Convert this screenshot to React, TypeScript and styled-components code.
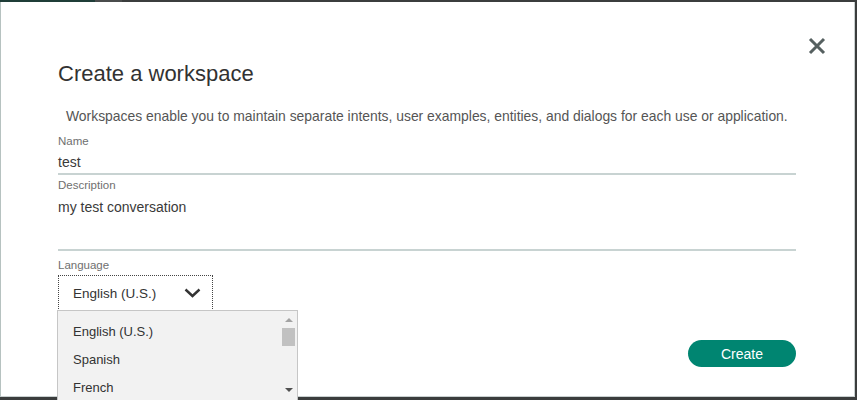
import * as React from 'react'
import styled, { createGlobalStyle } from 'styled-components'

const GlobalStyle = createGlobalStyle`
  html, body {
    margin: 0;
    padding: 0;
    background: #3b3d3d;
    font-family: "Liberation Sans", Arial, sans-serif;
  }
`

const languages = ['English (U.S.)', 'Spanish', 'French']

const Backdrop = styled.div`
  width: 857px;
  height: 400px;
  overflow: hidden;
  position: relative;
`

const TopStrip = styled.div`
  height: 2px;
  background: linear-gradient(90deg, #1f3d38 0 95px, #4a4c4c 95px 122px, #3b3d3d 122px);
`

const Modal = styled.div`
  position: relative;
  box-sizing: border-box;
  width: 855px;
  height: 395px;
  background: #fff;
  border-left: 1px solid #b6c2c0;
  border-right: 1px solid #c9d0d0;
  border-bottom: 1px solid #c9d0d0;
  padding: 0 58px 0 57px;
`

const CloseButton = styled.button`
  position: absolute;
  top: 35px;
  left: 807px;
  width: 18px;
  height: 18px;
  padding: 0;
  border: none;
  background: none;
  cursor: pointer;
  display: flex;
`

const Title = styled.h1`
  margin: 0;
  padding-top: 59px;
  font-size: 22px;
  line-height: 26px;
  font-weight: 400;
  color: #323232;
`

const Intro = styled.p`
  margin: 20px 0 6px 8px;
  font-size: 13.9px;
  line-height: 18px;
  color: #555;
`

const Field = styled.div<{ $height?: number; $ruled?: boolean }>`
  display: flex;
  flex-direction: column;
  border-bottom: ${(p) => (p.$ruled ? '2px solid #c8d3d2' : 'none')};
  height: ${(p) => (p.$height ? `${p.$height}px` : 'auto')};
`

const Label = styled.label<{ $gap?: number }>`
  font-size: 11.5px;
  line-height: 14px;
  color: #6f6f6f;
  margin-top: ${(p) => p.$gap ?? 3}px;
`

const Value = styled.div<{ $before?: number; $after?: number }>`
  font-size: 14px;
  line-height: 18px;
  color: #3a3a3a;
  margin-top: ${(p) => p.$before ?? 5}px;
  margin-bottom: ${(p) => p.$after ?? 0}px;
`

const SelectBox = styled.div`
  box-sizing: border-box;
  width: 155px;
  height: 36px;
  margin-top: 3px;
  border: 1px dotted #444;
  display: flex;
  align-items: center;
  justify-content: space-between;
  padding: 0 11px 0 14px;
  font-size: 13.5px;
  color: #333;
`

const Dropdown = styled.ul`
  position: absolute;
  left: 57px;
  top: 310px;
  width: 241px;
  height: 100px;
  box-sizing: border-box;
  margin: 0;
  padding: 7px 0 0;
  list-style: none;
  background: #f2f2f2;
  border: 1px solid #c6c6c6;
  overflow: hidden;
`

const Option = styled.li`
  height: 28px;
  line-height: 28px;
  padding-left: 15px;
  font-size: 13px;
  color: #333;
`

const Scrollbar = styled.div`
  position: absolute;
  top: 0;
  right: 0;
  width: 16px;
  height: 100%;
  background: #f2f2f2;
`

const Arrow = styled.div<{ $down?: boolean }>`
  position: absolute;
  left: 4px;
  width: 0;
  height: 0;
  border-left: 4px solid transparent;
  border-right: 4px solid transparent;
  ${(p) =>
    p.$down
      ? 'top: 77px; border-top: 4px solid #505050;'
      : 'top: 7px; border-bottom: 4px solid #a3a3a3;'}
`

const Thumb = styled.div`
  position: absolute;
  top: 17px;
  left: 1px;
  width: 13px;
  height: 18px;
  background: #c1c1c1;
`

const Footer = styled.div`
  display: flex;
  justify-content: flex-end;
  margin-top: 29px;
`

const CreateButton = styled.button`
  width: 108px;
  height: 27px;
  border: none;
  border-radius: 14px;
  background: #008571;
  color: #fff;
  font-family: inherit;
  font-size: 14px;
  cursor: pointer;
`

const Chevron = () => (
  <svg width="17" height="10" viewBox="0 0 17 10">
    <path d="M1.5 1.5 L8.5 8 L15.5 1.5" fill="none" stroke="#333" strokeWidth="2.4" />
  </svg>
)

const CloseIcon = () => (
  <svg width="18" height="18" viewBox="0 0 18 18">
    <path d="M2 2 L16 16 M16 2 L2 16" stroke="#566060" strokeWidth="3" />
  </svg>
)

const App: React.FC = () => (
  <>
    <GlobalStyle />
    <Backdrop>
      <TopStrip />
      <Modal>
        <CloseButton aria-label="Close">
          <CloseIcon />
        </CloseButton>
        <Title>Create a workspace</Title>
        <Intro>
          Workspaces enable you to maintain separate intents, user examples, entities, and dialogs
          for each use or application.
        </Intro>
        <Field $ruled>
          <Label>Name</Label>
          <Value $after={2}>test</Value>
        </Field>
        <Field $ruled $height={74}>
          <Label>Description</Label>
          <Value $before={6}>my test conversation</Value>
        </Field>
        <Field>
          <Label $gap={7}>Language</Label>
          <SelectBox>
            <span>English (U.S.)</span>
            <Chevron />
          </SelectBox>
        </Field>
        <Footer>
          <CreateButton>Create</CreateButton>
        </Footer>
      </Modal>
      <Dropdown>
        {languages.map((l) => (
          <Option key={l}>{l}</Option>
        ))}
        <Scrollbar>
          <Arrow />
          <Thumb />
          <Arrow $down />
        </Scrollbar>
      </Dropdown>
    </Backdrop>
  </>
)

export default App
